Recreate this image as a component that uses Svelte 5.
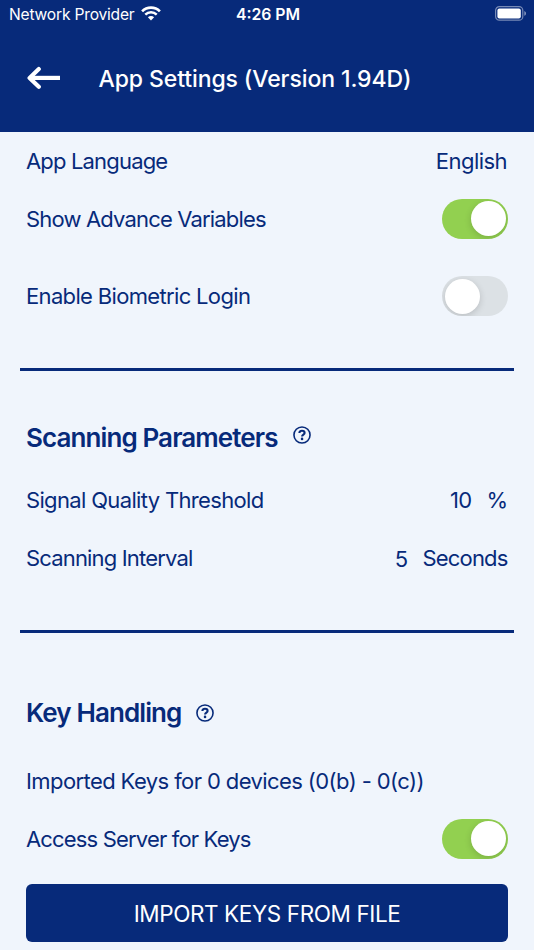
<script>
    let showAdvance = $state(true);
    let biometric = $state(false);
    let accessServer = $state(true);

    let language = 'English';
    let threshold = 10;
    let interval = 5;
</script>

{#snippet toggle(on, label, onclick)}
    <button class="toggle" class:toggle--on={on} role="switch" aria-checked={on} aria-label={label} {onclick}>
        <span class="toggle__knob"></span>
    </button>
{/snippet}

{#snippet help()}
    <svg class="help" viewBox="0 0 18 18" fill="none" stroke="currentColor">
        <circle cx="9" cy="9" r="8.05" stroke-width="1.6" />
        <path d="M6.4 7.1C6.4 5.6 7.5 4.8 9 4.8s2.6.8 2.6 2.1c0 1.6-2.5 1.7-2.5 3.5" stroke-width="2.1" />
        <circle cx="9.05" cy="12.9" r="1.3" fill="currentColor" stroke="none" />
    </svg>
{/snippet}

<div class="app">
    <header>
        <div class="status">
            <div class="status__left">
                <span class="carrier">Network Provider</span>
                <svg class="wifi" viewBox="0 0 20 15" fill="none" stroke="#fff">
                    <path d="M1.1 5.4a12.6 12.6 0 0 1 17.8 0" stroke-width="2.7" />
                    <path d="M4.3 8.7a8.1 8.1 0 0 1 11.4 0" stroke-width="2.5" />
                    <path d="M10 14.4l-3.1-3.1a4.4 4.4 0 0 1 6.2 0z" fill="#fff" stroke="none" />
                </svg>
            </div>
            <span class="clock">4:26 PM</span>
            <svg class="battery" viewBox="0 0 32 15">
                <rect x=".6" y=".6" width="27.2" height="13.6" rx="3.8" fill="none" stroke="#fff" stroke-opacity=".45" stroke-width="1.2" />
                <rect x="2.4" y="2.4" width="23.4" height="10" rx="2" fill="#fff" />
                <path d="M29.3 5v4.8c1-.4 1.7-1.3 1.7-2.4s-.7-2-1.7-2.4z" fill="#fff" fill-opacity=".5" />
            </svg>
        </div>
        <div class="navbar">
            <svg class="back" viewBox="0 0 34 24" fill="none" stroke="#fff" stroke-width="4.2" stroke-linejoin="round">
                <path d="M11.8 3.1L2.6 11.9l9.2 8.8" stroke-linecap="round" />
                <path d="M3.5 11.9H33" />
            </svg>
            <h1>App Settings (Version 1.94D)</h1>
        </div>
    </header>

    <section class="general">
        <div class="row">
            <span class="tight">App Language</span>
            <span class="english">{language}</span>
        </div>
        <div class="row">
            <span class="tight">Show Advance Variables</span>
            {@render toggle(showAdvance, 'Show Advance Variables', () => showAdvance = !showAdvance)}
        </div>
        <div class="row row--tall">
            <span>Enable Biometric Login</span>
            {@render toggle(biometric, 'Enable Biometric Login', () => biometric = !biometric)}
        </div>
    </section>

    <section class="scanning">
        <h2><span>Scanning Parameters</span>{@render help()}</h2>
        <div class="row">
            <span>Signal Quality Threshold</span>
            <span class="value"><span class="num">{threshold}</span><span>%</span></span>
        </div>
        <div class="row">
            <span class="tight">Scanning Interval</span>
            <span class="value value--low"><span class="num">{interval}</span><span class="tight">Seconds</span></span>
        </div>
    </section>

    <section class="keys">
        <h2><span>Key Handling</span>{@render help()}</h2>
        <div class="row">
            <span class="imported">Imported Keys for 0 devices (0(b) - 0(c))</span>
        </div>
        <div class="row">
            <span class="tight">Access Server for Keys</span>
            {@render toggle(accessServer, 'Access Server for Keys', () => accessServer = !accessServer)}
        </div>
        <button class="btn-import">IMPORT KEYS FROM FILE</button>
    </section>
</div>

<style>
    :global(body){
        margin: 0;
        background: #f0f5fc;
    }
    .app{
        height: 950px;
        overflow: hidden;
        background: #f0f5fc;
        color: #072a7a;
        font-family: Inter, "Liberation Sans", sans-serif;
        font-size: 22px;
        letter-spacing: -0.66px;
        white-space: nowrap;
    }
    .tight{
        letter-spacing: -0.83px;
    }
    .english{
        letter-spacing: -0.55px;
        padding-right: 1px;
    }
    .imported{
        letter-spacing: -0.59px;
    }
    header{
        height: 131.6px;
        background: #072a7a;
        color: #fff;
    }
    .status{
        display: grid;
        grid-template-columns: 1fr auto 1fr;
        align-items: center;
        height: 27px;
        padding: 0 7px 0 9px;
    }
    .status__left{
        display: flex;
        align-items: center;
        gap: 6px;
    }
    .carrier{
        font-size: 15.6px;
        letter-spacing: -0.2px;
        padding-top: 1px;
    }
    .wifi{
        width: 20px;
        height: 15px;
    }
    .clock{
        font-size: 15.8px;
        font-weight: 600;
        letter-spacing: 0;
        padding-top: 1px;
    }
    .battery{
        width: 32px;
        height: 15px;
        justify-self: end;
    }
    .navbar{
        display: flex;
        align-items: center;
        gap: 38px;
        height: 103px;
        padding-left: 26.5px;
    }
    .back{
        width: 34px;
        height: 24px;
        margin-bottom: 1px;
    }
    h1{
        margin: 0;
        font-size: 23px;
        font-weight: 500;
        letter-spacing: -0.1px;
    }
    section{
        padding: 0 26px;
    }
    .row{
        display: flex;
        align-items: center;
        justify-content: space-between;
        height: 58px;
    }
    .row--tall{
        height: 97px;
    }
    .general{
        padding-bottom: 23px;
    }
    .scanning{
        padding-bottom: 42.4px;
    }
    /* full width rule above a group, slightly wider than its rows */
    .scanning::before, .keys::before{
        content: '';
        display: block;
        height: 3px;
        margin: 0 -6.4px;
        background: #072a7a;
    }
    h2{
        display: flex;
        align-items: center;
        height: 67px;
        margin: 33.8px 0 0;
        font-size: 26px;
        font-weight: 600;
        letter-spacing: -0.9px;
    }
    .keys h2{
        margin-top: 45px;
        height: 70px;
    }
    .keys h2 + .row{
        height: 66px;
    }
    .keys .row:last-of-type{
        height: 50px;
    }
    .help{
        width: 18px;
        height: 18px;
        margin: 0 0 5px 15px;
    }
    .keys .help{
        margin-bottom: 0;
    }
    .value{
        display: flex;
        gap: 15px;
        padding-right: 0.5px;
    }
    .value--low .num{
        margin-top: 1px;
    }
    .toggle{
        width: 66px;
        height: 40px;
        padding: 2.5px;
        border: 0;
        border-radius: 20px;
        background: #dce1e5;
        display: flex;
        align-items: center;
        overflow: hidden;
    }
    .toggle--on{
        background: #92d050;
        justify-content: flex-end;
    }
    .toggle__knob{
        width: 35px;
        height: 35px;
        border-radius: 50%;
        background: #fff;
        box-shadow: 0 2px 7px rgba(0,0,0,.16);
    }
    .btn-import{
        width: 100%;
        height: 58px;
        margin-top: 20px;
        padding: 2px 0 0;
        border: 0;
        border-radius: 6px;
        background: #072a7a;
        color: #fff;
        font-family: inherit;
        font-size: 22.5px;
        letter-spacing: -0.4px;
    }
</style>
